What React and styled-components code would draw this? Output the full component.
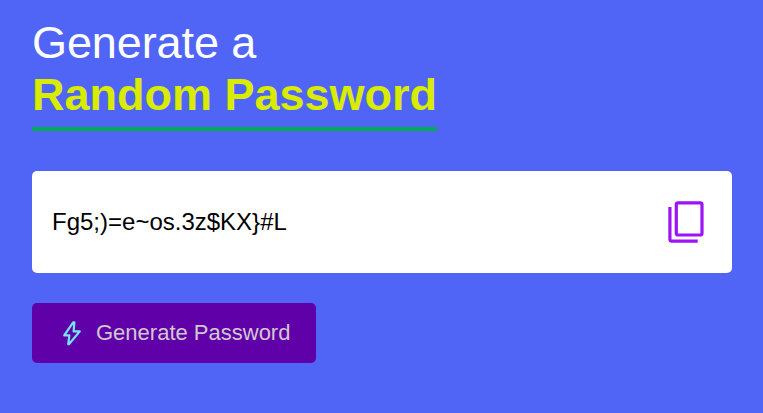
import React from "react";
import styled, { createGlobalStyle } from "styled-components";

const GlobalStyle = createGlobalStyle`
  * { box-sizing: border-box; }
  body { margin: 0; background: #5065f6; font-family: "Liberation Sans", Arial, sans-serif; }
`;

const Page = styled.main`
  padding: 17px 31px 50px 32px;
  min-height: 413px;
  display: flex;
  flex-direction: column;
  align-items: flex-start;
`;

const Title = styled.h1`
  margin: 0 0 40px;
  font-size: 45px;
  line-height: 52px;
  font-weight: 400;
  letter-spacing: -0.1px;
  color: #fff;
`;

const Highlight = styled.span`
  display: block;
  width: 405px;
  height: 62px;
  font-weight: 700;
  letter-spacing: 0;
  color: #d9ec00;
  border-bottom: 4px solid #00ab55;
  white-space: nowrap;
`;

const PasswordField = styled.div`
  display: flex;
  align-items: center;
  justify-content: space-between;
  width: 700px;
  height: 102px;
  padding: 0 26px 0 20px;
  margin-bottom: 30px;
  border-radius: 5px;
  background: #fff;
`;

const Password = styled.span`
  font-size: 24px;
  line-height: 28px;
  color: #000;
`;

const IconButton = styled.button`
  display: flex;
  padding: 0;
  border: 0;
  background: none;
`;

const GenerateButton = styled.button`
  display: flex;
  align-items: center;
  width: 284px;
  height: 60px;
  padding: 0 0 0 28px;
  gap: 12px;
  border: 0;
  border-radius: 5px;
  background: #6000a8;
  color: #d0c8cf;
  font-family: inherit;
  font-size: 22px;
  white-space: nowrap;
`;

const CopyIcon = () => (
  <svg width="38" height="44" viewBox="0 0 38 44" fill="none" stroke="#9c13f7" strokeWidth="3.2">
    <rect x="8.3" y="2.8" width="25.7" height="32.2" rx="1.8" />
    <path d="M1.9 7v32.2q0 2 2 2H29.7" />
  </svg>
);

const BoltIcon = () => (
  <svg width="24" height="28" viewBox="0 0 24 28" fill="none" stroke="#76e4f7" strokeWidth="2.2" strokeLinejoin="round">
    <path d="M13.2 3.4L4.2 16.4h5.2l-1.2 8.8h.7L19.8 12.4h-6.2l.8-9z" />
  </svg>
);

export default function App() {
  return (
    <>
      <GlobalStyle />
      <Page>
        <Title>
          Generate a<Highlight>Random Password</Highlight>
        </Title>
        <PasswordField>
          <Password>{"Fg5;)=e~os.3z$KX}#L"}</Password>
          <IconButton aria-label="Copy"><CopyIcon /></IconButton>
        </PasswordField>
        <GenerateButton><BoltIcon />Generate Password</GenerateButton>
      </Page>
    </>
  );
}
